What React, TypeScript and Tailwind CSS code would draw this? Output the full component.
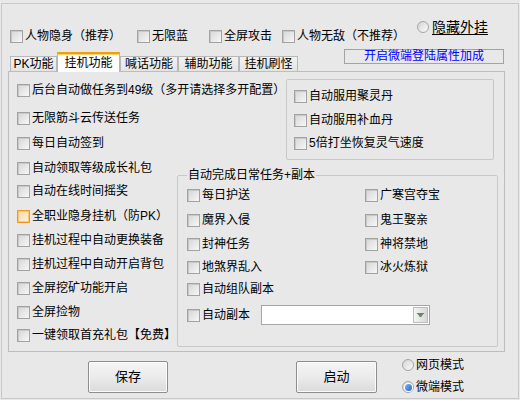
import React from "react";

function Check({ label, focus = false }: { label: string; focus?: boolean }) {
  return (
    <div className="flex items-center h-[16px] whitespace-nowrap">
      <div
        className={
          focus
            ? "w-[13px] h-[13px] border border-[#f09a22] bg-gradient-to-br from-[#f7d9a8] to-[#fdf3e2] shadow-[inset_0_0_0_1px_#fbc76a] shrink-0"
            : "w-[13px] h-[13px] border border-[#a2a2a2] bg-gradient-to-br from-[#d6d6d6] to-[#f7f7f7] shadow-[inset_1px_1px_0_0_#c8c8c8] shrink-0"
        }
      />
      <span className="ml-[2px] text-[12px] leading-[16px] text-black">{label}</span>
    </div>
  );
}

function Radio({ label, checked = false, big = false }: { label: string; checked?: boolean; big?: boolean }) {
  return (
    <div className="flex items-center whitespace-nowrap">
      <div className="w-[12px] h-[12px] rounded-full border border-[#a4a4a4] bg-gradient-to-br from-[#d4d4d4] to-[#fbfbfb] flex items-center justify-center shrink-0">
        {checked && (
          <div className="w-[7px] h-[7px] rounded-full bg-gradient-to-br from-[#7fb6f4] to-[#1c64c8] shadow-[0_0_0_1px_#ffffff]" />
        )}
      </div>
      <span
        className={
          big
            ? "ml-[3px] text-[14px] leading-[16px] text-black underline underline-offset-[2px]"
            : "ml-[2px] text-[12px] leading-[16px] text-black"
        }
      >
        {label}
      </span>
    </div>
  );
}

const leftRows: { label: string; mt: string; focus?: boolean }[] = [
  { label: "后台自动做任务到49级（多开请选择多开配置）", mt: "mt-[10px]" },
  { label: "无限筋斗云传送任务", mt: "mt-[12px]" },
  { label: "每日自动签到", mt: "mt-[9px]" },
  { label: "自动领取等级成长礼包", mt: "mt-[9px]" },
  { label: "自动在线时间摇奖", mt: "mt-[7px]" },
  { label: "全职业隐身挂机（防PK）", mt: "mt-[9px]", focus: true },
  { label: "挂机过程中自动更换装备", mt: "mt-[8px]" },
  { label: "挂机过程中自动开启背包", mt: "mt-[8px]" },
  { label: "全屏挖矿功能开启", mt: "mt-[8px]" },
  { label: "全屏捡物", mt: "mt-[8px]" },
  { label: "一键领取首充礼包【免费】", mt: "mt-[7px]" },
];

const groupRows: { left: string; right?: string; mt: string }[] = [
  { left: "每日护送", right: "广寒宫夺宝", mt: "mt-[11px]" },
  { left: "魔界入侵", right: "鬼王娶亲", mt: "mt-[9px]" },
  { left: "封神任务", right: "神将禁地", mt: "mt-[8px]" },
  { left: "地煞界乱入", right: "冰火炼狱", mt: "mt-[7px]" },
  { left: "自动组队副本", mt: "mt-[6px]" },
];

const tabs: { label: string; w: string; active?: boolean }[] = [
  { label: "PK功能", w: "w-[47px]" },
  { label: "挂机功能", w: "w-[63px]", active: true },
  { label: "喊话功能", w: "w-[58px]" },
  { label: "辅助功能", w: "w-[61px]" },
  { label: "挂机刷怪", w: "w-[59px]" },
];

function Button({ label, w }: { label: string; w: string }) {
  return (
    <div
      className={
        w +
        " h-[32px] rounded-[2px] border border-[#8e8e8e] shadow-[inset_0_0_0_1px_#fbfbfb] bg-gradient-to-b from-[#f5f5f5] via-[#ebebeb] to-[#dadada] flex items-center justify-center text-[13px] leading-[16px] text-black"
      }
    >
      {label}
    </div>
  );
}

export default function App() {
  return (
    <div
      className="w-[520px] h-[400px] bg-[#e8e8e8] overflow-hidden"
      style={{ fontFamily: '"Liberation Sans", "Noto Sans CJK SC", sans-serif' }}
    >
      <div className="ml-[1px] mt-[3px] w-[518px] h-[396px] border border-[#c8c8c8] flex flex-col">
        {/* header */}
        <div className="h-[67px] flex flex-col shrink-0">
          <div className="h-[44px] flex">
            <div className="w-[415px] flex items-start pt-[24px] pl-[8px]">
              <div className="w-[127px]">
                <Check label="人物隐身（推荐）" />
              </div>
              <div className="w-[72px]">
                <Check label="无限蓝" />
              </div>
              <div className="w-[73px]">
                <Check label="全屏攻击" />
              </div>
              <div>
                <Check label="人物无敌（不推荐）" />
              </div>
            </div>
            <div className="pt-[15px]">
              <Radio label="隐藏外挂" big />
            </div>
          </div>
          <div className="h-[23px] flex items-end">
            <div className="ml-[8px] flex items-end h-full">
              {tabs.map((t) =>
                t.active ? (
                  <div
                    key={t.label}
                    className={
                      t.w +
                      " relative z-10 -mb-px h-[20px] bg-[#fdfdfd] border-x border-[#b4b4b4] border-t-2 border-t-[#f39c12] shadow-[inset_0_1px_0_0_#ffd36b] flex items-center justify-center text-[12px] leading-[16px] text-black"
                    }
                  >
                    {t.label}
                  </div>
                ) : (
                  <div
                    key={t.label}
                    className={
                      t.w +
                      " h-[15px] bg-gradient-to-b from-[#f2f2f2] to-[#e4e4e4] border-x border-t border-[#b8b8b8] flex items-center justify-center text-[12px] leading-[14px] text-black"
                    }
                  >
                    {t.label}
                  </div>
                )
              )}
            </div>
            <div className="ml-auto mr-[14px] self-start mt-[1px] w-[160px] h-[15px] border border-[#a3a3a3] flex items-center justify-center text-[12px] leading-[13px] text-[#0000ff]">
              开启微端登陆属性加成
            </div>
          </div>
        </div>

        {/* tab panel */}
        <div className="ml-[6px] w-[497px] h-[281px] border border-[#bdbdbd] flex shrink-0">
          <div className="w-[168px] pl-[8px] flex flex-col">
            {leftRows.map((r) => (
              <div key={r.label} className={r.mt}>
                <Check label={r.label} focus={r.focus} />
              </div>
            ))}
          </div>
          <div className="flex-1 flex flex-col">
            <div className="ml-[109px] mt-[7px] w-[208px] h-[81px] border border-[#c8c8c8] rounded-[2px] pl-[7px] flex flex-col">
              <div className="mt-[8px]">
                <Check label="自动服用聚灵丹" />
              </div>
              <div className="mt-[8px]">
                <Check label="自动服用补血丹" />
              </div>
              <div className="mt-[7px]">
                <Check label="5倍打坐恢复灵气速度" />
              </div>
            </div>
            <div className="mt-[15px] w-[321px] h-[172px] border border-[#c8c8c8] rounded-[2px] relative flex flex-col">
              <div className="absolute left-[9px] -top-[9px] px-[1px] bg-[#e8e8e8] text-[12px] leading-[16px] text-black whitespace-nowrap">
                自动完成日常任务+副本
              </div>
              {groupRows.map((r) => (
                <div key={r.left} className={r.mt + " flex"}>
                  <div className="w-[187px] pl-[9px]">
                    <Check label={r.left} />
                  </div>
                  {r.right && <Check label={r.right} />}
                </div>
              ))}
              <div className="mt-[8px] flex items-center pl-[9px] h-[20px]">
                <div className="w-[74px]">
                  <Check label="自动副本" />
                </div>
                <div className="w-[169px] h-[20px] border border-[#a6a6a6] bg-white flex justify-end p-[1px]">
                  <div className="w-[15px] h-full border border-[#bdbdbd] bg-gradient-to-r from-[#f4f4f4] to-[#d8d8d8] flex items-center justify-center">
                    <svg width="9" height="6" viewBox="0 0 9 6">
                      <path d="M0.5 1 H8.5 L4.5 5 Z" fill="#7a7a7a" />
                      <rect x="3.5" y="3" width="2" height="2" fill="#3aa33a" />
                    </svg>
                  </div>
                </div>
              </div>
            </div>
          </div>
        </div>

        {/* bottom */}
        <div className="h-[46px] flex items-start pt-[9px] shrink-0">
          <div className="ml-[86px]">
            <Button label="保存" w="w-[80px]" />
          </div>
          <div className="ml-[128px]">
            <Button label="启动" w="w-[81px]" />
          </div>
          <div className="ml-[25px] -mt-[6px] flex flex-col gap-[2px]">
            <div className="h-[20px] flex items-center">
              <Radio label="网页模式" />
            </div>
            <div className="h-[20px] flex items-center">
              <Radio label="微端模式" checked />
            </div>
          </div>
        </div>
      </div>
    </div>
  );
}
